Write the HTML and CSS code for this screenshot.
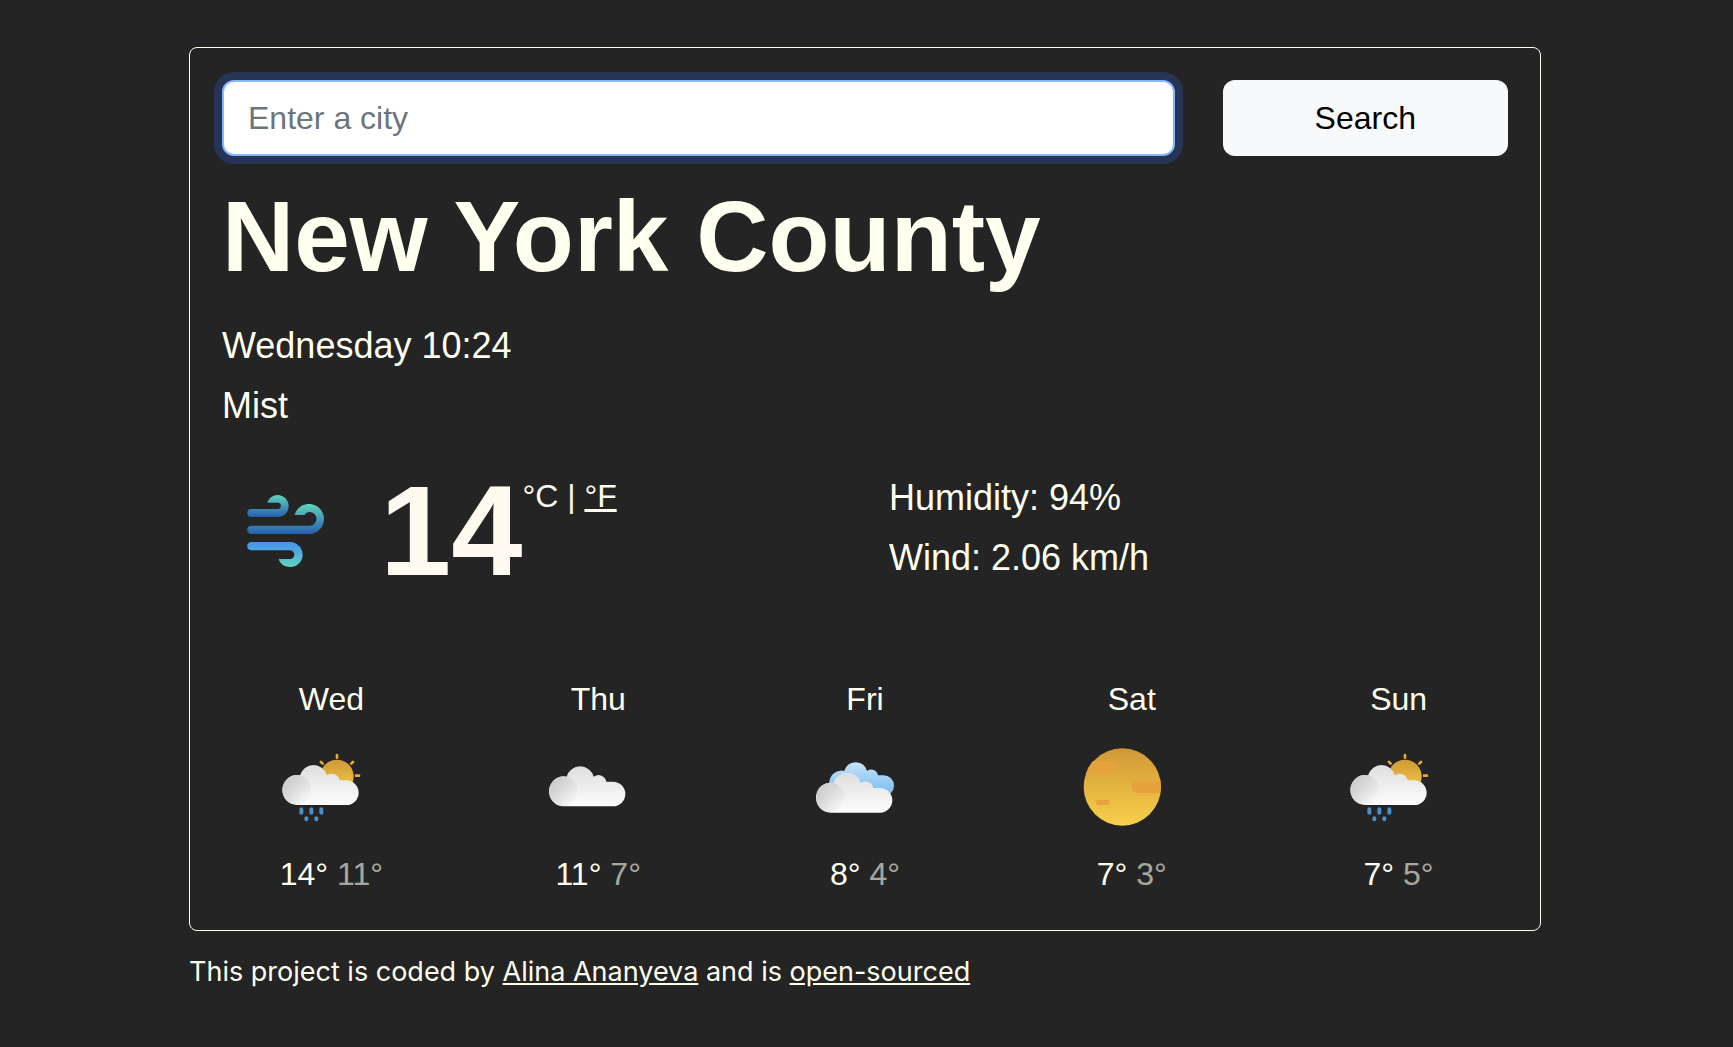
FILE: index.html
```html
<!DOCTYPE html>
<html lang="en">
<head>
  <meta charset="utf-8">
  <meta name="viewport" content="width=device-width, initial-scale=1">
  <title>Weather</title>
  <link rel="stylesheet" href="styles.css">
</head>
<body>
  <svg class="defs" width="0" height="0" aria-hidden="true">
    <defs>
      <linearGradient id="cloud-body" gradientUnits="userSpaceOnUse" x1="0" y1="78" x2="0" y2="198">
        <stop offset="0" stop-color="#dedede"/><stop offset="1" stop-color="#fdfdfd"/>
      </linearGradient>
      <linearGradient id="cloud-side" gradientUnits="userSpaceOnUse" x1="48" y1="125" x2="122" y2="170">
        <stop offset="0" stop-color="#cdcdcd"/><stop offset="1" stop-color="#cdcdcd" stop-opacity="0"/>
      </linearGradient>
      <linearGradient id="cloud-blue" gradientUnits="userSpaceOnUse" x1="0" y1="78" x2="0" y2="198">
        <stop offset="0" stop-color="#c6e4fb"/><stop offset="1" stop-color="#74b8ec"/>
      </linearGradient>
      <linearGradient id="sun-fill" x1="0" y1="0" x2="0" y2="1">
        <stop offset="0" stop-color="#cf9835"/><stop offset="1" stop-color="#f9cf4b"/>
      </linearGradient>
      <linearGradient id="wind-top" gradientUnits="userSpaceOnUse" x1="0" y1="33" x2="0" y2="99">
        <stop offset="0" stop-color="#63d2bd"/><stop offset="1" stop-color="#265fae"/>
      </linearGradient>
      <linearGradient id="wind-middle" gradientUnits="userSpaceOnUse" x1="0" y1="60" x2="0" y2="150">
        <stop offset="0" stop-color="#63d2bd"/><stop offset="1" stop-color="#265fae"/>
      </linearGradient>
      <linearGradient id="wind-bottom" gradientUnits="userSpaceOnUse" x1="0" y1="174" x2="0" y2="249">
        <stop offset="0" stop-color="#4790f0"/><stop offset="1" stop-color="#60d3bf"/>
      </linearGradient>
      <path id="cloud-shape" d="M81 198A44 45 0 1 1 89 109A42 42 0 0 1 170 109A24 24 0 0 1 208 124H228A37 37 0 0 1 228 198Z"/>
      <g id="cloud">
        <use href="#cloud-shape" fill="url(#cloud-body)"/>
        <ellipse cx="80" cy="153" rx="43" ry="45" fill="url(#cloud-side)"/>
      </g>
      <g id="rain-sun">
        <circle cx="200" cy="112" r="50" fill="url(#sun-fill)"/>
        <g stroke="#e5a63c" stroke-width="8" stroke-linecap="round">
          <path d="M200 48v8M152 69l5 5M248 69l-5 5M257 110h9"/>
        </g>
        <use href="#cloud"/>
        <g stroke="#4a8fc7" stroke-width="12" stroke-linecap="round">
          <path d="M93 211v10M123 211v10M153 211v10M108 238v3M138 238v3"/>
        </g>
      </g>
    </defs>
  </svg>

  <main class="card">
    <form class="search" onsubmit="return false">
      <input class="search-input" type="search" placeholder="Enter a city" aria-label="City">
      <button class="search-button" type="submit">Search</button>
    </form>

    <h1 class="city">New York County</h1>
    <ul class="details overview">
      <li>Wednesday 10:24</li>
      <li>Mist</li>
    </ul>

    <section class="current">
      <div class="now">
        <svg class="now-icon" viewBox="0 0 300 285" role="img" aria-label="Mist">
          <path fill="url(#wind-top)" d="M97 56C102 42 114 33 128 33C146 33 161 48 161 66C161 84 147 99 129 99H49A12 12 0 0 1 49 75H128A9 9 0 0 0 128 56Z"/>
          <path fill="url(#wind-middle)" d="M179 93C184 73 201 60 222 60C247 60 267 80 267 105C267 130 247 150 222 150H49A12 12 0 0 1 49 125H224A20 20 0 0 0 224 84C216 84 212 87 209 93Z"/>
          <path fill="url(#wind-bottom)" d="M49 174H165C186 174 203 191 203 212C203 233 186 249 165 249C149 249 135 240 131 225H165A13 13 0 0 0 165 199H49A12 12 0 0 1 49 174Z"/>
        </svg>
        <strong class="temperature">14</strong>
        <span class="units">°C | <a href="#">°F</a></span>
      </div>
      <ul class="details">
        <li>Humidity: 94%</li>
        <li>Wind: 2.06 km/h</li>
      </ul>
    </section>

    <section class="forecast">
      <div class="day">
        <div>Wed</div>
        <svg class="day-icon" viewBox="2 0 300 285" role="img" aria-label="Rain and sun"><use href="#rain-sun"/></svg>
        <div>14° <span class="low">11°</span></div>
      </div>
      <div class="day">
        <div>Thu</div>
        <svg class="day-icon" viewBox="-6 0 300 285" role="img" aria-label="Cloudy"><use href="#cloud" transform="translate(-9 4)"/></svg>
        <div>11° <span class="low">7°</span></div>
      </div>
      <div class="day">
        <div>Fri</div>
        <svg class="day-icon" viewBox="0 0 300 285" role="img" aria-label="Broken clouds">
          <use href="#cloud-shape" fill="url(#cloud-blue)" transform="translate(42 3) scale(.85)"/>
          <use href="#cloud" transform="translate(-3 23)"/>
        </svg>
        <div>8° <span class="low">4°</span></div>
      </div>
      <div class="day">
        <div>Sat</div>
        <svg class="day-icon" viewBox="6 0 300 285" role="img" aria-label="Clear">
          <circle cx="157" cy="144" r="116" fill="url(#sun-fill)"/>
          <g fill="#e5a23d">
            <path d="M69 66H121A20 20 0 0 1 121 106H47Q54 82 69 66Z"/>
            <path d="M203 125H271Q274 145 271 162H203A18 18 0 0 1 203 125Z"/>
            <rect x="78" y="182" width="40" height="16" rx="8"/>
          </g>
        </svg>
        <div>7° <span class="low">3°</span></div>
      </div>
      <div class="day">
        <div>Sun</div>
        <svg class="day-icon" viewBox="2 0 300 285" role="img" aria-label="Rain and sun"><use href="#rain-sun"/></svg>
        <div>7° <span class="low">5°</span></div>
      </div>
    </section>
  </main>

  <footer class="credits">This project is coded by <a href="#">Alina Ananyeva</a> and is <a href="#">open-sourced</a></footer>
</body>
</html>
```
FILE: styles.css
```css
* {
  box-sizing: border-box;
}

body {
  margin: 0;
  padding: 47px 192px 32px 189px;
  background: #242424;
  color: ivory;
  font: 32px/48px Arial, "Liberation Sans", sans-serif;
}

a {
  color: inherit;
}

.defs {
  display: block;
}

.card {
  padding: 32px;
  border: 1px solid ivory;
  border-radius: 8px;
}

.search {
  display: grid;
  grid-template-columns: repeat(12, 1fr);
  gap: 48px;
}

.search-input,
.search-button {
  height: 76px;
  border-radius: 12px;
  font: inherit;
}

.search-input {
  grid-column: span 9;
  min-width: 0;
  padding: 0 24px;
  appearance: none;
  border: 2px solid #86b7fe;
  outline: 0;
  background: #fff;
  color: #212529;
  box-shadow: 0 0 0 8px #263456;
}

.search-input::placeholder {
  color: #6c757d;
  opacity: 1;
}

.search-button {
  grid-column: span 3;
  padding: 0;
  border: 0;
  background: #f8f9fa;
  color: #000;
}

.city {
  margin: 20px 0;
  font-size: 100px;
  line-height: 120px;
}

.details {
  margin: 0;
  padding: 0;
  list-style: none;
  font-size: 36px;
  line-height: 60px;
}

.current {
  display: grid;
  grid-template-columns: 1fr 1fr;
  gap: 48px;
  margin-top: 32px;
}

.now {
  display: flex;
  align-items: flex-start;
}

.now-icon {
  width: 100px;
  height: 95px;
  margin: 16px 45px 0 13px;
}

.temperature {
  color: floralwhite;
  font-size: 128px;
  line-height: 126px;
}

.units {
  color: floralwhite;
  line-height: 56px;
}

.forecast {
  display: grid;
  grid-template-columns: repeat(5, 1fr);
  gap: 48px;
  margin-top: 81px;
  text-align: center;
}

.day-icon {
  display: block;
  width: 100px;
  height: 95px;
  margin: 16px auto;
  translate: -10px;
}

.low {
  opacity: .6;
}

.credits {
  margin-top: 20px;
  font: 27px/42px Inter, sans-serif;
}
```
